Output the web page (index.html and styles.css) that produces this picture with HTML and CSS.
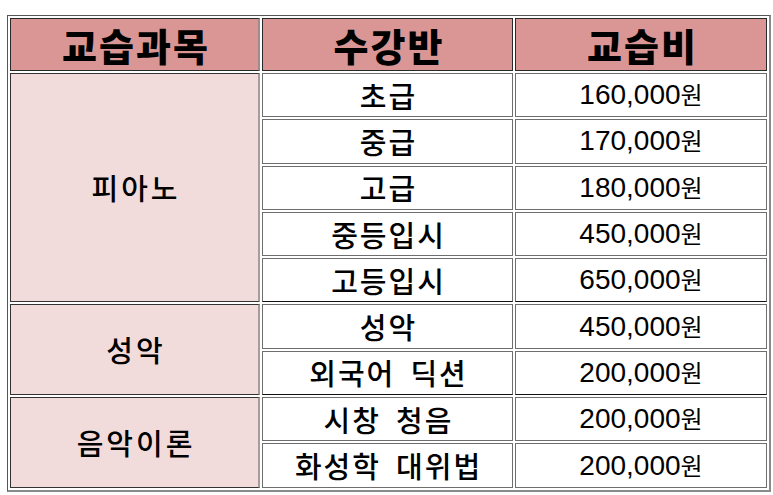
FILE: index.html
```html
<!DOCTYPE html>
<html lang="ko">
<head>
<meta charset="utf-8">
<link rel="stylesheet" href="styles.css">
</head>
<body>
<table class="fees">
  <colgroup>
    <col class="c1"><col class="c2"><col class="c3">
  </colgroup>
  <thead>
    <tr><th>교습과목</th><th>수강반</th><th>교습비</th></tr>
  </thead>
  <tbody>
    <tr><td class="subj" rowspan="5">피아노</td><td class="cls">초급</td><td class="fee">160,000<span class="won">원</span></td></tr>
    <tr><td class="cls">중급</td><td class="fee">170,000<span class="won">원</span></td></tr>
    <tr><td class="cls">고급</td><td class="fee">180,000<span class="won">원</span></td></tr>
    <tr><td class="cls">중등입시</td><td class="fee">450,000<span class="won">원</span></td></tr>
    <tr class="grp-end"><td class="cls">고등입시</td><td class="fee">650,000<span class="won">원</span></td></tr>
    <tr><td class="subj" rowspan="2">성악</td><td class="cls">성악</td><td class="fee">450,000<span class="won">원</span></td></tr>
    <tr class="grp-end"><td class="cls">외국어 딕션</td><td class="fee">200,000<span class="won">원</span></td></tr>
    <tr><td class="subj" rowspan="2">음악이론</td><td class="cls">시창 청음</td><td class="fee">200,000<span class="won">원</span></td></tr>
    <tr><td class="cls">화성학 대위법</td><td class="fee">200,000<span class="won">원</span></td></tr>
  </tbody>
</table>
</body>
</html>
```
FILE: styles.css
```css
html, body {
  margin: 0;
  padding: 0;
  background: #ffffff;
}
body {
  padding: 15px 0 0 7px;
}
.fees {
  width: 761px;
  table-layout: fixed;
  border-collapse: separate;
  border-spacing: 2px;
  border-top: 1px solid #555;
  border-left: 1px solid #555;
  border-right: 2px solid #8a8a8a;
  border-bottom: 2px solid #8a8a8a;
  background: #ffffff;
  font-family: "Noto Sans CJK KR", sans-serif;
  color: #000;
}
.c1 { width: 250px; }
.c2 { width: 251px; }
.c3 { width: 252px; }
.fees th {
  height: 51px;
  padding: 0 0 0 3px;
  background: #da9694;
  border: 1px solid #2a2a2a;
  font-size: 38px;
  font-weight: 900;
  letter-spacing: 2px;
  line-height: 1;
  text-align: center;
  vertical-align: middle;
}
.fees th:first-child { border-right: 2px solid #a08a8a; }
.fees td {
  height: 42.3px;
  padding: 0;
  border: 1px solid #6e6e6e;
  text-align: center;
  vertical-align: middle;
  line-height: 1;
  background: #ffffff;
}
.fees td.subj {
  background: #f2dcdb;
  border: 1px solid #333;
  border-right: 2px solid #a99b9b;
  font-size: 29px;
  font-weight: 500;
  letter-spacing: 3px;
  padding-left: 3px;
}
.fees td.cls {
  font-size: 29px;
  font-weight: 500;
  letter-spacing: 2px;
  word-spacing: 5px;
  padding-left: 2px;
}
.fees td.fee {
  font-family: "Liberation Sans", "Noto Sans CJK KR", sans-serif;
  font-size: 28px;
  letter-spacing: 0px;
}
.won {
  font-family: "Noto Sans CJK KR", sans-serif;
  font-size: 24px;
}
.grp-end td { border-bottom-color: #111; }
```
